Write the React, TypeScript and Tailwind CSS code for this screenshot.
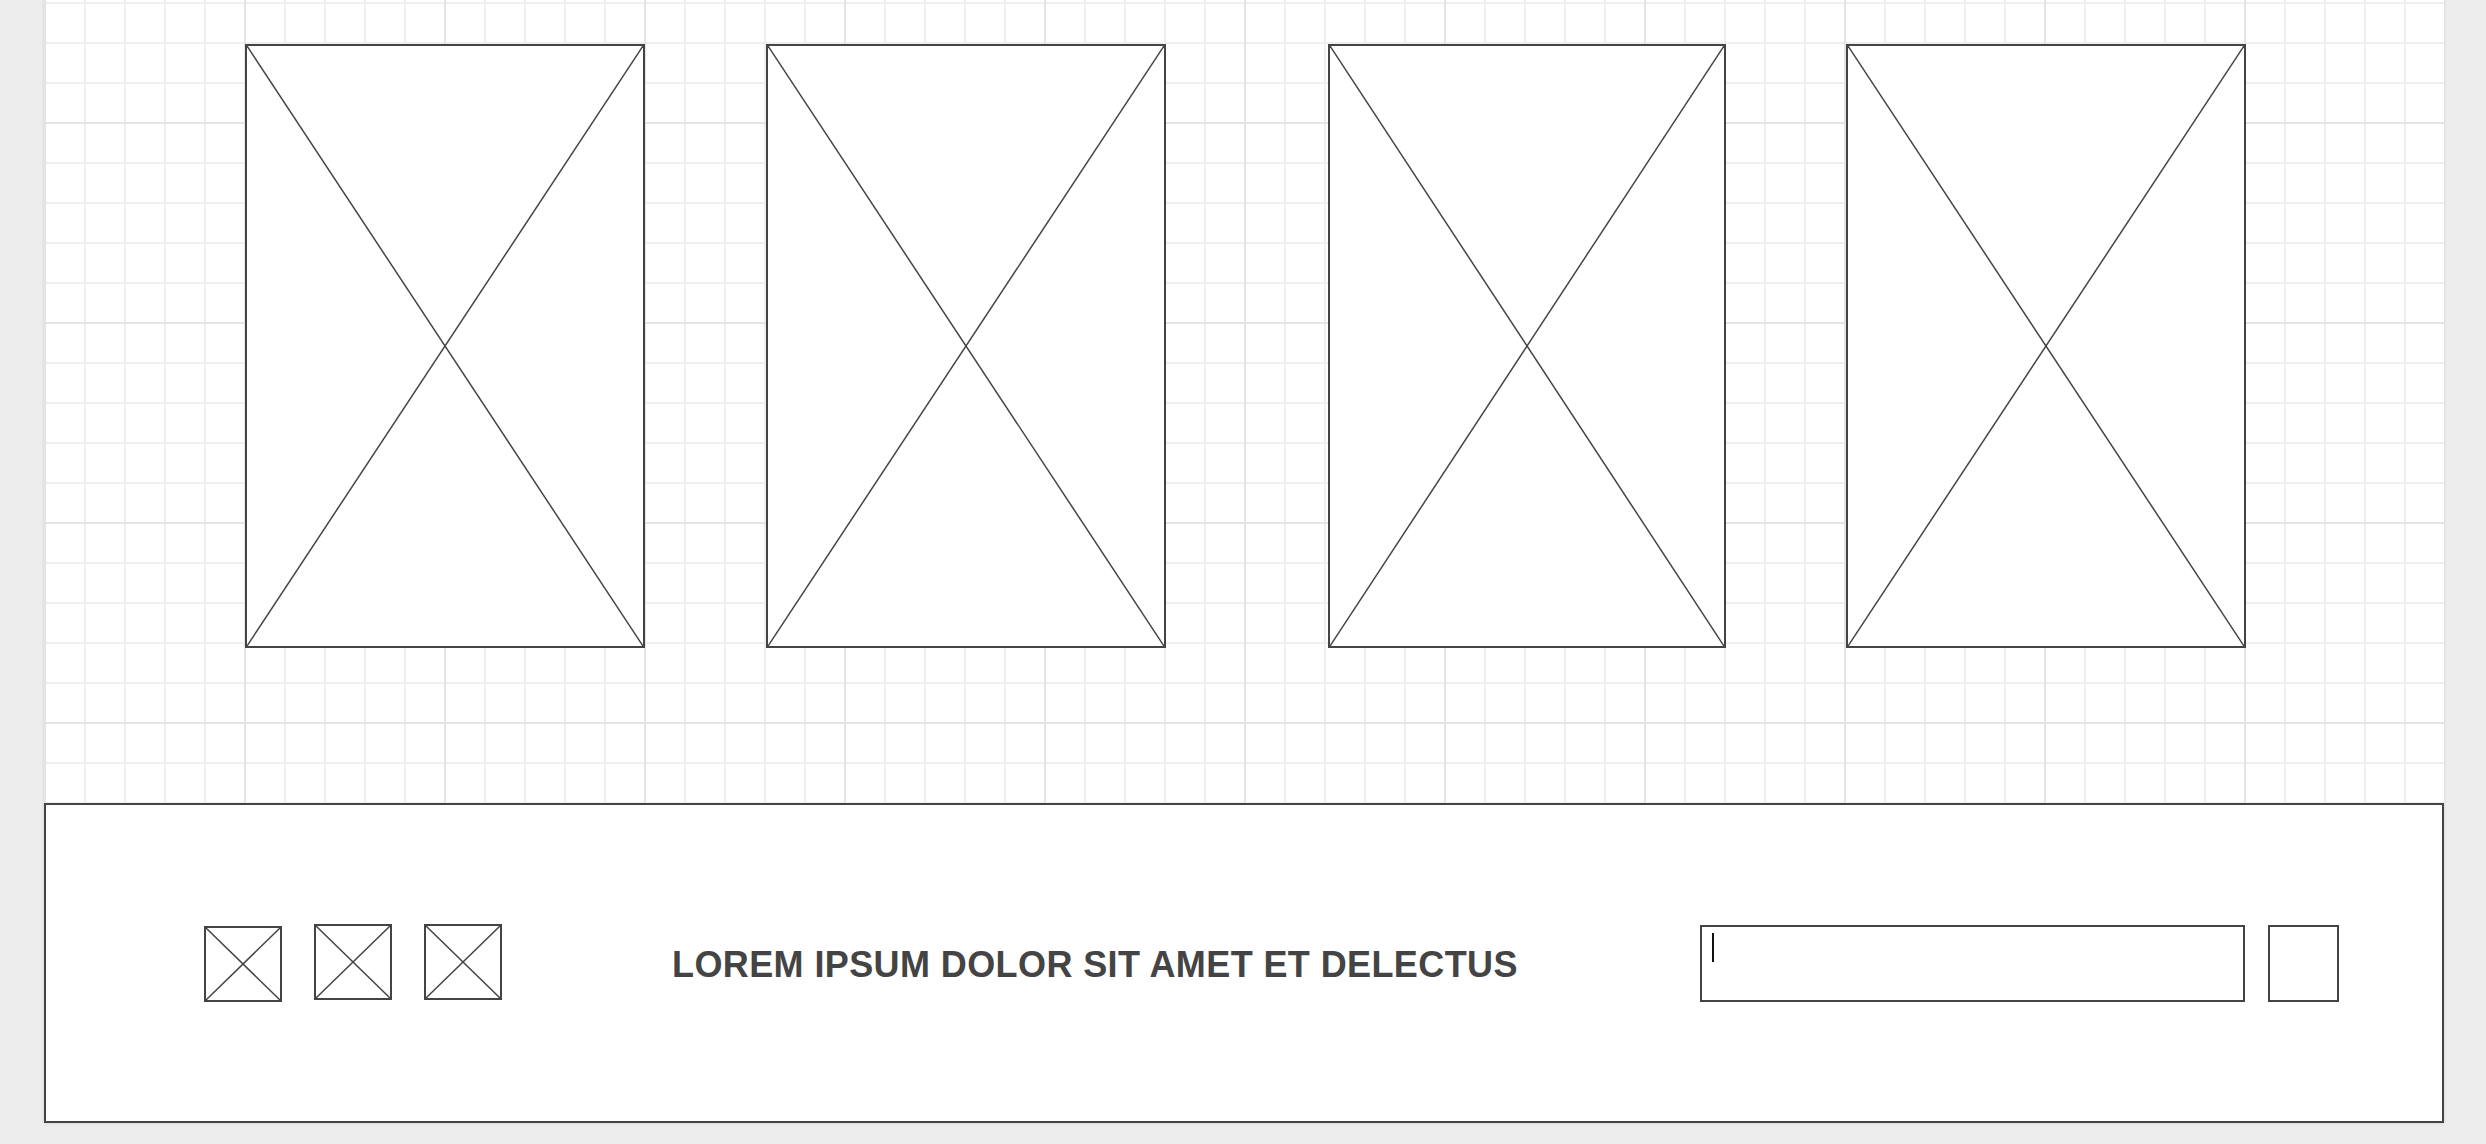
import React from 'react';

const Cross: React.FC<{ stroke?: number }> = ({ stroke = 1.5 }) => (
  <svg className="absolute inset-0 w-full h-full" preserveAspectRatio="none" viewBox="0 0 100 100">
    <line x1="0" y1="0" x2="100" y2="100" stroke="#444" strokeWidth={stroke} vectorEffect="non-scaling-stroke" />
    <line x1="100" y1="0" x2="0" y2="100" stroke="#444" strokeWidth={stroke} vectorEffect="non-scaling-stroke" />
  </svg>
);

const ImagePlaceholder: React.FC<{ className?: string }> = ({ className = '' }) => (
  <div className={`relative h-[604px] border-2 border-[#444] bg-white ${className}`}>
    <Cross />
  </div>
);

const SmallIcon: React.FC<{ className?: string }> = ({ className = '' }) => (
  <div className={`relative w-[78px] h-[76px] border-2 border-[#444] bg-white ${className}`}>
    <Cross stroke={1.5} />
  </div>
);

const App: React.FC = () => {
  return (
    <div className="min-h-screen bg-[#ededed]">
      <div className="ml-[44px] w-[2400px] flex flex-col shadow-[0_0_3px_rgba(0,0,0,0.12)] bg-white bg-[linear-gradient(to_right,#e4e4e4_2px,transparent_2px),linear-gradient(to_bottom,#e4e4e4_2px,transparent_2px),linear-gradient(to_right,#efefef_2px,transparent_2px),linear-gradient(to_bottom,#efefef_2px,transparent_2px)] bg-[size:200px_200px,200px_200px,40px_40px,40px_40px] bg-[position:0_0,0_122px,0_0,0_2px]">
        {/* Image row */}
        <div className="h-[803px] pt-[44px] pl-[201px] flex items-start">
          <ImagePlaceholder className="w-[400px]" />
          <ImagePlaceholder className="w-[400px] ml-[121px]" />
          <ImagePlaceholder className="w-[398px] ml-[162px]" />
          <ImagePlaceholder className="w-[400px] ml-[120px]" />
        </div>

        {/* Footer */}
        <div className="h-[320px] border-2 border-[#444] bg-white flex items-center pl-[158px] pr-[103px]">
          <SmallIcon className="translate-y-[1px]" />
          <SmallIcon className="ml-[32px] -translate-y-[1px]" />
          <SmallIcon className="ml-[32px] -translate-y-[1px]" />
          <span className="ml-[170px] translate-y-[2px] font-['Liberation_Sans',Arial,sans-serif] font-bold text-[36px] leading-none tracking-[0.4px] text-[#444]">
            LOREM IPSUM DOLOR SIT AMET ET DELECTUS
          </span>
          <div className="ml-auto relative w-[545px] h-[77px] border-2 border-[#444] bg-white">
            <div className="absolute left-[10px] top-[6px] w-[2px] h-[29px] bg-[#111]" />
          </div>
          <div className="ml-[23px] w-[71px] h-[77px] border-2 border-[#444] bg-white" />
        </div>
      </div>
    </div>
  );
};

export default App;
